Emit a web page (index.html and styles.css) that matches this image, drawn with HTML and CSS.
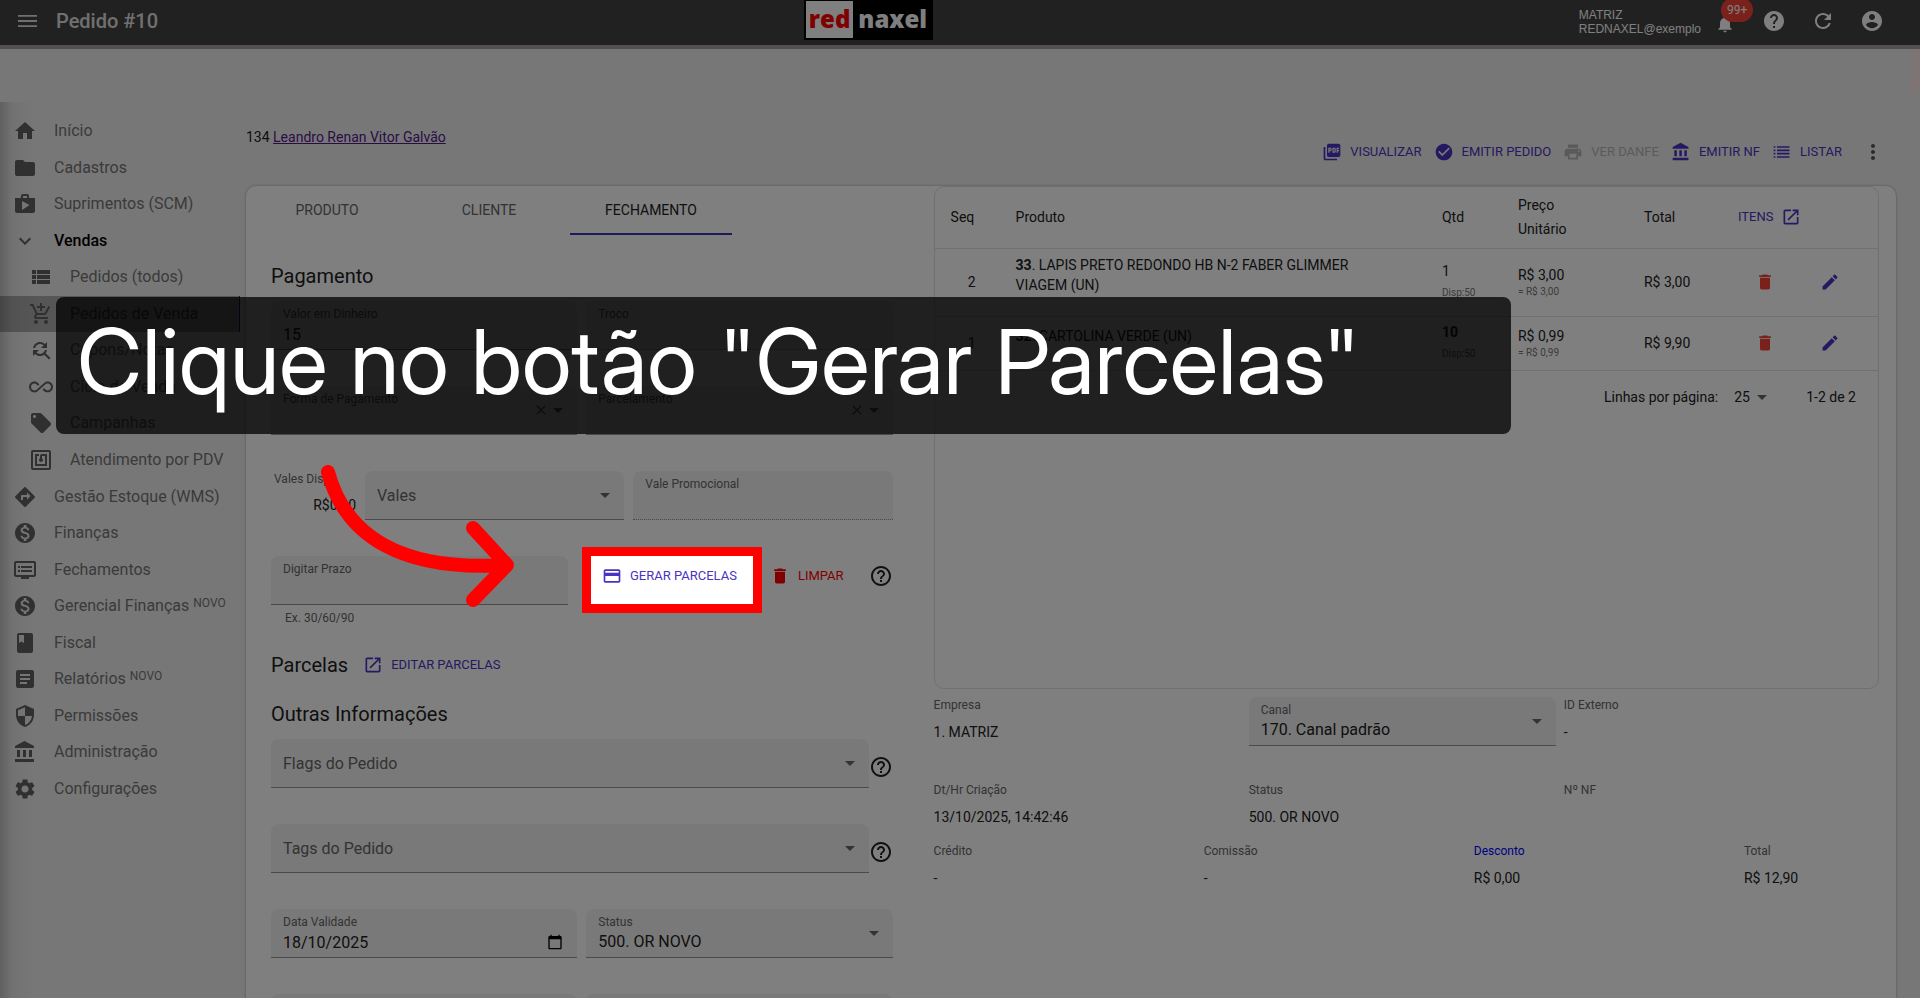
FILE: index.html
```html
<!DOCTYPE html>
<html lang="pt-BR">
<head>
    <meta charset="UTF-8">
    <meta name="viewport" content="width=device-width, initial-scale=1.0">
    <title>Pedido #10</title>
    <link rel="stylesheet" href="styles.css">
</head>
<body>

    <!-- Icon set -->
    <svg class="sprite" aria-hidden="true">
        <symbol id="i-menu" viewBox="0 0 24 24"><path d="M2 6h19v1.800H2zM2 11.100h19v1.800H2zM2 16.200h19V18H2z"/></symbol>
        <symbol id="i-bell" viewBox="0 0 24 24"><path d="M12 22c1.100 0 2-.9 2-2h-4c0 1.100.9 2 2 2zm6-6v-5c0-3.070-1.640-5.640-4.500-6.320V4c0-.83-.67-1.500-1.500-1.500s-1.500.67-1.500 1.500v.68C7.630 5.360 6 7.920 6 11v5l-2 2v1h16v-1l-2-2z"/></symbol>
        <symbol id="i-help" viewBox="0 0 24 24"><path d="M12 2C6.480 2 2 6.480 2 12s4.480 10 10 10 10-4.480 10-10S17.520 2 12 2zm1 17h-2v-2h2v2zm2.070-7.750l-.9.920C13.450 12.900 13 13.500 13 15h-2v-.5c0-1.100.45-2.100 1.170-2.830l1.240-1.260c.37-.36.59-.86.59-1.410 0-1.100-.9-2-2-2s-2 .9-2 2H8c0-2.210 1.790-4 4-4s4 1.790 4 4c0 .88-.36 1.680-.93 2.250z"/></symbol>
        <symbol id="i-help-o" viewBox="0 0 24 24"><path d="M11 18h2v-2h-2v2zm1-16C6.480 2 2 6.480 2 12s4.480 10 10 10 10-4.480 10-10S17.520 2 12 2zm0 18c-4.410 0-8-3.590-8-8s3.590-8 8-8 8 3.590 8 8-3.590 8-8 8zm0-14c-2.210 0-4 1.790-4 4h2c0-1.100.9-2 2-2s2 .9 2 2c0 2-3 1.750-3 5h2c0-2.250 3-2.500 3-5 0-2.210-1.790-4-4-4z"/></symbol>
        <symbol id="i-refresh" viewBox="0 0 24 24"><path d="M17.650 6.350C16.200 4.900 14.210 4 12 4c-4.420 0-7.990 3.580-7.990 8s3.570 8 7.990 8c3.730 0 6.840-2.550 7.730-6h-2.080c-.82 2.330-3.040 4-5.650 4-3.310 0-6-2.690-6-6s2.690-6 6-6c1.660 0 3.140.69 4.220 1.780L13 11h7V4l-2.350 2.350z"/></symbol>
        <symbol id="i-account" viewBox="0 0 24 24"><path d="M12 2C6.480 2 2 6.480 2 12s4.480 10 10 10 10-4.480 10-10S17.520 2 12 2zm0 3c1.660 0 3 1.340 3 3s-1.340 3-3 3-3-1.340-3-3 1.340-3 3-3zm0 14.200c-2.500 0-4.710-1.280-6-3.220.03-1.990 4-3.080 6-3.080 1.990 0 5.970 1.090 6 3.080-1.290 1.940-3.500 3.220-6 3.220z"/></symbol>
        <symbol id="i-home" viewBox="0 0 24 24"><path d="M10 20v-6h4v6h5v-8h3L12 3 2 12h3v8z"/></symbol>
        <symbol id="i-folder" viewBox="0 0 24 24"><path d="M10 4H4c-1.100 0-1.990.9-1.990 2L2 18c0 1.100.9 2 2 2h16c1.100 0 2-.9 2-2V8c0-1.100-.9-2-2-2h-8l-2-2z"/></symbol>
        <symbol id="i-shop" viewBox="0 0 24 24"><path d="M16 6V4c0-1.110-.89-2-2-2h-4c-1.110 0-2 .89-2 2v2H2v13c0 1.110.89 2 2 2h16c1.110 0 2-.89 2-2V6h-6zm-6-2h4v2h-4V4zM9 18V9l7.500 4L9 18z"/></symbol>
        <symbol id="i-down" viewBox="0 0 24 24"><path d="M7.410 8.590L12 13.170l4.590-4.580L18 10l-6 6-6-6z"/></symbol>
        <symbol id="i-viewlist" viewBox="0 0 24 24"><path d="M3 14h4v-4H3v4zm0 5h4v-4H3v4zM3 9h4V5H3v4zm5 5h13v-4H8v4zm0 5h13v-4H8v4zM8 5v4h13V5H8z"/></symbol>
        <symbol id="i-cart" viewBox="0 0 24 24"><path d="M11 9h2V6h3V4h-3V1h-2v3H8v2h3v3zm-4 9c-1.100 0-1.990.9-1.990 2S5.900 22 7 22s2-.9 2-2-.9-2-2-2zm10 0c-1.100 0-1.990.9-1.990 2s.89 2 1.990 2 2-.9 2-2-.9-2-2-2zm-9.830-3.250l.03-.12.9-1.630h7.450c.75 0 1.410-.41 1.750-1.030l3.860-7.010L19.420 4h-.01l-1.100 2-2.760 5H8.530l-.13-.27L6.160 6l-.95-2-.94-2H1v2h2l3.600 7.590-1.350 2.450c-.16.28-.25.61-.25.96 0 1.100.9 2 2 2h12v-2H7.420c-.13 0-.25-.11-.25-.25z"/></symbol>
        <symbol id="i-findrep" viewBox="0 0 24 24"><path d="M11 6c1.380 0 2.630.56 3.540 1.460L12 10h6V4l-2.050 2.050C14.680 4.780 12.930 4 11 4c-3.530 0-6.430 2.610-6.920 6H6.100c.46-2.280 2.480-4 4.900-4zm5.640 9.140c.66-.9 1.120-1.970 1.280-3.140H15.900c-.46 2.280-2.480 4-4.900 4-1.380 0-2.630-.56-3.540-1.460L10 12H4v6l2.050-2.050C7.320 17.220 9.070 18 11 18c1.550 0 2.980-.51 4.140-1.360L20 21.490 21.490 20l-4.850-4.860z"/></symbol>
        <symbol id="i-infinity" viewBox="0 0 24 24"><path d="M18.600 6.620c-1.440 0-2.800.56-3.770 1.530L7.800 14.390c-.64.64-1.490.99-2.400.99-1.870 0-3.390-1.510-3.390-3.380S3.530 8.620 5.400 8.620c.91 0 1.760.35 2.440 1.030l1.130 1 1.510-1.340L9.220 8.200C8.200 7.180 6.840 6.620 5.400 6.620 2.420 6.620 0 9.040 0 12s2.420 5.380 5.400 5.380c1.440 0 2.800-.56 3.770-1.530l7.030-6.240c.64-.64 1.490-.99 2.400-.99 1.870 0 3.390 1.510 3.390 3.380s-1.520 3.380-3.390 3.380c-.9 0-1.760-.35-2.440-1.030l-1.140-1.010-1.510 1.340 1.270 1.120c1.020 1.010 2.370 1.570 3.820 1.570 2.980 0 5.400-2.410 5.400-5.380s-2.420-5.370-5.400-5.370z"/></symbol>
        <symbol id="i-tag" viewBox="0 0 24 24"><path d="M21.410 11.580l-9-9C12.050 2.220 11.550 2 11 2H4c-1.100 0-2 .9-2 2v7c0 .55.22 1.050.59 1.420l9 9c.36.36.86.58 1.410.58.55 0 1.050-.22 1.410-.59l7-7c.37-.36.59-.86.59-1.410 0-.55-.23-1.060-.59-1.420zM5.500 7C4.670 7 4 6.330 4 5.500S4.670 4 5.500 4 7 4.670 7 5.500 6.330 7 5.500 7z"/></symbol>
        <symbol id="i-nfc" viewBox="0 0 24 24"><path d="M20 2H4c-1.100 0-2 .9-2 2v16c0 1.100.9 2 2 2h16c1.100 0 2-.9 2-2V4c0-1.100-.9-2-2-2zm0 18H4V4h16v16zM18 6h-5c-1.100 0-2 .9-2 2v2.280c-.6.35-1 .98-1 1.720 0 1.100.9 2 2 2s2-.9 2-2c0-.74-.4-1.380-1-1.720V8h3v8H8V8h2V6H6v12h12V6z"/></symbol>
        <symbol id="i-directions" viewBox="0 0 24 24"><path d="M21.710 11.290l-9-9c-.39-.39-1.020-.39-1.410 0l-9 9c-.39.39-.39 1.020 0 1.410l9 9c.39.39 1.020.39 1.410 0l9-9c.39-.38.39-1.010 0-1.410zM14 14.500V12h-4v3H8v-4c0-.55.45-1 1-1h5V7.500l3.500 3.500-3.500 3.500z"/></symbol>
        <symbol id="i-money" viewBox="0 0 24 24"><path d="M12 2C6.480 2 2 6.480 2 12s4.480 10 10 10 10-4.480 10-10S17.520 2 12 2zm1.410 16.090V20h-2.670v-1.930c-1.710-.36-3.160-1.460-3.270-3.400h1.960c.1 1.050.82 1.870 2.650 1.870 1.960 0 2.400-.98 2.400-1.590 0-.83-.44-1.610-2.670-2.140-2.480-.6-4.180-1.620-4.180-3.670 0-1.720 1.390-2.840 3.110-3.210V4h2.670v1.950c1.860.45 2.790 1.860 2.850 3.390H14.300c-.05-1.110-.64-1.870-2.220-1.870-1.500 0-2.400.68-2.400 1.640 0 .84.65 1.390 2.670 1.910s4.180 1.390 4.180 3.910c-.01 1.830-1.380 2.830-3.120 3.160z"/></symbol>
        <symbol id="i-dvr" viewBox="0 0 24 24"><path d="M21 3H3c-1.100 0-2 .9-2 2v12c0 1.100.9 2 2 2h5v2h8v-2h5c1.100 0 1.990-.9 1.990-2L23 5c0-1.100-.9-2-2-2zm0 14H3V5h18v12zm-2-9H8v2h11V8zm0 4H8v2h11v-2zM7 8H5v2h2V8zm0 4H5v2h2v-2z"/></symbol>
        <symbol id="i-book" viewBox="0 0 24 24"><path d="M18 2H6c-1.100 0-2 .9-2 2v16c0 1.100.9 2 2 2h12c1.100 0 2-.9 2-2V4c0-1.100-.9-2-2-2zM6 4h5v8l-2.500-1.500L6 12V4z"/></symbol>
        <symbol id="i-article" viewBox="0 0 24 24"><path d="M19 3H5c-1.100 0-2 .9-2 2v14c0 1.100.9 2 2 2h14c1.100 0 2-.9 2-2V5c0-1.100-.9-2-2-2zm-5 14H7v-2h7v2zm3-4H7v-2h10v2zm0-4H7V7h10v2z"/></symbol>
        <symbol id="i-shield" viewBox="0 0 24 24"><path d="M12 1L3 5v6c0 5.550 3.840 10.740 9 12 5.160-1.260 9-6.450 9-12V5l-9-4zm0 10.990h7c-.53 4.120-3.280 7.790-7 8.940V12H5V6.300l7-3.110v8.800z"/></symbol>
        <symbol id="i-bank" viewBox="0 0 24 24"><path d="M4 10v7h3v-7H4zm6 0v7h3v-7h-3zM2 22h19v-3H2v3zm14-12v7h3v-7h-3zm-4.500-9L2 6v2h19V6l-9.500-5z"/></symbol>
        <symbol id="i-gear" viewBox="0 0 24 24"><path d="M19.140 12.940c.04-.3.060-.61.060-.94 0-.32-.02-.64-.07-.94l2.030-1.580c.18-.14.23-.41.12-.61l-1.920-3.320c-.12-.22-.37-.29-.59-.22l-2.390.96c-.5-.38-1.030-.7-1.620-.94l-.36-2.540c-.04-.24-.24-.41-.48-.41h-3.840c-.24 0-.43.17-.47.41l-.36 2.540c-.59.24-1.130.57-1.620.94l-2.390-.96c-.22-.08-.47 0-.59.22L2.740 8.870c-.12.21-.08.47.12.61l2.030 1.580c-.05.3-.09.63-.09.94s.02.64.07.94l-2.030 1.580c-.18.14-.23.41-.12.61l1.920 3.320c.12.22.37.29.59.22l2.390-.96c.5.38 1.030.7 1.620.94l.36 2.540c.05.24.24.41.48.41h3.840c.24 0 .44-.17.47-.41l.36-2.540c.59-.24 1.130-.56 1.620-.94l2.390.96c.22.08.47 0 .59-.22l1.920-3.320c.12-.22.07-.47-.12-.61l-2.010-1.580zM12 15.600c-1.980 0-3.600-1.620-3.600-3.600s1.620-3.600 3.600-3.600 3.600 1.620 3.600 3.600-1.620 3.600-3.600 3.600z"/></symbol>
        <symbol id="i-pdf" viewBox="0 0 24 24"><path d="M20 2H8c-1.100 0-2 .9-2 2v12c0 1.100.9 2 2 2h12c1.100 0 2-.9 2-2V4c0-1.100-.9-2-2-2zm-8.500 7.500c0 .83-.67 1.500-1.500 1.500H9v2H7.500V7H10c.83 0 1.500.67 1.500 1.500v1zm5 2c0 .83-.67 1.500-1.500 1.500h-2.500V7H15c.83 0 1.500.67 1.500 1.500v3zm4-3H19v1h1.500V11H19v2h-1.500V7h3v1.500zM9 9.500h1v-1H9v1zM4 6H2v14c0 1.100.9 2 2 2h14v-2H4V6zm10 5.500h1v-3h-1v3z"/></symbol>
        <symbol id="i-check" viewBox="0 0 24 24"><path d="M12 2C6.480 2 2 6.480 2 12s4.480 10 10 10 10-4.480 10-10S17.520 2 12 2zm-2 15l-5-5 1.410-1.410L10 14.170l7.590-7.590L19 8l-9 9z"/></symbol>
        <symbol id="i-print" viewBox="0 0 24 24"><path d="M19 8H5c-1.660 0-3 1.340-3 3v6h4v4h12v-4h4v-6c0-1.660-1.340-3-3-3zm-3 11H8v-5h8v5zm3-7c-.55 0-1-.45-1-1s.45-1 1-1 1 .45 1 1-.45 1-1 1zm-1-9H6v4h12V3z"/></symbol>
        <symbol id="i-list" viewBox="0 0 24 24"><path d="M2 7h2v-2H2v2zm0 4h2V9H2v2zm0 4h2v-2H2v2zm0 4h2v-2H2v2zM6 5v2h15V5H6zm0 6h15V9H6v2zm0 4h15v-2H6v2zm0 4h15v-2H6v2z"/></symbol>
        <symbol id="i-more" viewBox="0 0 24 24"><path d="M12 8c1.100 0 2-.9 2-2s-.9-2-2-2-2 .9-2 2 .9 2 2 2zm0 2c-1.100 0-2 .9-2 2s.9 2 2 2 2-.9 2-2-.9-2-2-2zm0 6c-1.100 0-2 .9-2 2s.9 2 2 2 2-.9 2-2-.9-2-2-2z"/></symbol>
        <symbol id="i-open" viewBox="0 0 24 24"><path d="M19 19H5V5h7V3H5c-1.110 0-2 .9-2 2v14c0 1.100.89 2 2 2h14c1.100 0 2-.9 2-2v-7h-2v7zM14 3v2h3.590l-9.830 9.830 1.410 1.410L19 6.410V10h2V3h-7z"/></symbol>
        <symbol id="i-trash" viewBox="0 0 24 24"><path d="M6 19c0 1.100.9 2 2 2h8c1.100 0 2-.9 2-2V7H6v12zM19 4h-3.500l-1-1h-5l-1 1H5v2h14V4z"/></symbol>
        <symbol id="i-pencil" viewBox="0 0 24 24"><path d="M3 17.250V21h3.750L17.810 9.940l-3.750-3.750L3 17.250zM20.710 7.040c.39-.39.39-1.020 0-1.410l-2.340-2.340c-.39-.39-1.020-.39-1.410 0l-1.830 1.830 3.750 3.750 1.830-1.830z"/></symbol>
        <symbol id="i-card" viewBox="0 0 24 24"><path d="M20 4H4c-1.110 0-1.990.89-1.990 2L2 18c0 1.110.89 2 2 2h16c1.110 0 2-.89 2-2V6c0-1.110-.89-2-2-2zm0 14H4v-6h16v6zm0-10H4V6h16v2z"/></symbol>
        <symbol id="i-caret" viewBox="0 0 24 24"><path d="M7 10l5 5 5-5z"/></symbol>
        <symbol id="i-close" viewBox="0 0 24 24"><path d="M19 6.410L17.590 5 12 10.590 6.410 5 5 6.410 10.590 12 5 17.590 6.410 19 12 13.410 17.590 19 19 17.590 13.410 12z"/></symbol>
        <symbol id="i-calendar" viewBox="0 0 24 24"><path d="M20 3h-1V1h-2v2H7V1H5v2H4c-1.100 0-2 .9-2 2v16c0 1.100.9 2 2 2h16c1.100 0 2-.9 2-2V5c0-1.100-.9-2-2-2zm0 18H4V8h16v13z"/></symbol>
    </svg>

    <header class="topbar">
        <div class="topbar-left">
            <button class="icon-btn" aria-label="Menu"><svg class="icon"><use href="#i-menu"/></svg></button>
            <h1 class="title">Pedido #10</h1>
        </div>
        <a class="logo" href="#"><span class="logo-red">red</span><span class="logo-naxel">naxel</span></a>
        <div class="topbar-right">
            <div class="account">MATRIZ<br>REDNAXEL@exemplo</div>
            <button class="icon-btn bell" aria-label="Notificações"><svg class="icon-20"><use href="#i-bell"/></svg><span class="badge">99+</span></button>
            <button class="icon-btn" aria-label="Ajuda"><svg class="icon"><use href="#i-help"/></svg></button>
            <button class="icon-btn" aria-label="Atualizar"><svg class="icon"><use href="#i-refresh"/></svg></button>
            <button class="icon-btn" aria-label="Conta"><svg class="icon"><use href="#i-account"/></svg></button>
        </div>
    </header>

    <div class="layout">
        <nav class="sidebar">
            <ul class="menu">
                <li><a href="#"><svg class="icon"><use href="#i-home"/></svg>Início</a></li>
                <li><a href="#"><svg class="icon"><use href="#i-folder"/></svg>Cadastros</a></li>
                <li><a href="#"><svg class="icon"><use href="#i-shop"/></svg>Suprimentos (SCM)</a></li>
                <li><a href="#" class="open"><svg class="icon"><use href="#i-down"/></svg>Vendas</a></li>
                <li><a href="#" class="sub"><svg class="icon"><use href="#i-viewlist"/></svg>Pedidos (todos)</a></li>
                <li><a href="#" class="sub selected"><svg class="icon"><use href="#i-cart"/></svg>Pedidos de Venda</a></li>
                <li><a href="#" class="sub"><svg class="icon"><use href="#i-findrep"/></svg>Cupons/Notas</a></li>
                <li><a href="#" class="sub"><svg class="icon"><use href="#i-infinity"/></svg>Ciclo de Venda</a></li>
                <li><a href="#" class="sub"><svg class="icon"><use href="#i-tag"/></svg>Campanhas</a></li>
                <li><a href="#" class="sub"><svg class="icon"><use href="#i-nfc"/></svg>Atendimento por PDV</a></li>
                <li><a href="#"><svg class="icon"><use href="#i-directions"/></svg>Gestão Estoque (WMS)</a></li>
                <li><a href="#"><svg class="icon"><use href="#i-money"/></svg>Finanças</a></li>
                <li><a href="#"><svg class="icon"><use href="#i-dvr"/></svg>Fechamentos</a></li>
                <li><a href="#"><svg class="icon"><use href="#i-money"/></svg><span>Gerencial Finanças <sup>NOVO</sup></span></a></li>
                <li><a href="#"><svg class="icon"><use href="#i-book"/></svg>Fiscal</a></li>
                <li><a href="#"><svg class="icon"><use href="#i-article"/></svg><span>Relatórios <sup>NOVO</sup></span></a></li>
                <li><a href="#"><svg class="icon"><use href="#i-shield"/></svg>Permissões</a></li>
                <li><a href="#"><svg class="icon"><use href="#i-bank"/></svg>Administração</a></li>
                <li><a href="#"><svg class="icon"><use href="#i-gear"/></svg>Configurações</a></li>
            </ul>
        </nav>

        <main class="content">
            <div class="content-head">
                <div class="customer">134 <a href="#">Leandro Renan Vitor Galvão</a></div>
                <div class="toolbar">
                    <button class="btn"><svg class="icon-20"><use href="#i-pdf"/></svg>VISUALIZAR</button>
                    <button class="btn"><svg class="icon-20"><use href="#i-check"/></svg>EMITIR PEDIDO</button>
                    <button class="btn" disabled><svg class="icon-20"><use href="#i-print"/></svg>VER DANFE</button>
                    <button class="btn"><svg class="icon-20"><use href="#i-bank"/></svg>EMITIR NF</button>
                    <button class="btn"><svg class="icon-20"><use href="#i-list"/></svg>LISTAR</button>
                    <button class="icon-btn more" aria-label="Mais opções"><svg class="icon"><use href="#i-more"/></svg></button>
                </div>
            </div>

            <div class="card">
                <section class="left">
                    <div class="tabs" role="tablist">
                        <button class="tab" role="tab">PRODUTO</button>
                        <button class="tab" role="tab">CLIENTE</button>
                        <button class="tab active" role="tab" aria-selected="true">FECHAMENTO</button>
                    </div>

                    <form class="form">
                        <h2>Pagamento</h2>
                        <div class="stack">
                            <div class="row-2">
                                <div class="field">
                                    <label for="dinheiro">Valor em Dinheiro</label>
                                    <input id="dinheiro" type="text" value="15">
                                </div>
                                <div class="field off">
                                    <label for="troco">Troco</label>
                                    <input id="troco" type="text" disabled>
                                </div>
                            </div>
                            <div class="row-2">
                                <div class="field">
                                    <label for="forma">Forma de Pagamento</label>
                                    <select id="forma"><option></option></select>
                                    <svg class="clear"><use href="#i-close"/></svg>
                                    <svg class="caret"><use href="#i-caret"/></svg>
                                </div>
                                <div class="field">
                                    <label for="parcelamento">Parcelamento</label>
                                    <select id="parcelamento"><option></option></select>
                                    <svg class="clear"><use href="#i-close"/></svg>
                                    <svg class="caret"><use href="#i-caret"/></svg>
                                </div>
                            </div>
                            <div class="row-vales">
                                <div class="vales">
                                    <span class="vales-label">Vales Disp:</span>
                                    <span class="vales-value">R$0,00</span>
                                </div>
                                <div class="field rest">
                                    <select aria-label="Vales"><option>Vales</option></select>
                                    <svg class="caret"><use href="#i-caret"/></svg>
                                </div>
                                <div class="field off">
                                    <label for="promo">Vale Promocional</label>
                                    <input id="promo" type="text" disabled>
                                </div>
                            </div>
                            <div class="row-prazo">
                                <div class="prazo">
                                    <div class="field">
                                        <label for="prazo">Digitar Prazo</label>
                                        <input id="prazo" type="text">
                                    </div>
                                    <small>Ex. 30/60/90</small>
                                </div>
                                <div class="spotlight">
                                    <button type="button" class="btn"><svg class="icon-20"><use href="#i-card"/></svg>GERAR PARCELAS</button>
                                </div>
                                <button type="button" class="btn red"><svg class="icon-20"><use href="#i-trash"/></svg>LIMPAR</button>
                                <button type="button" class="icon-btn help" aria-label="Ajuda prazo"><svg class="icon"><use href="#i-help-o"/></svg></button>
                            </div>
                        </div>

                        <div class="heading-row">
                            <h2>Parcelas</h2>
                            <button type="button" class="btn"><svg class="icon-20"><use href="#i-open"/></svg>EDITAR PARCELAS</button>
                        </div>

                        <h2>Outras Informações</h2>
                        <div class="stack">
                            <div class="row-help">
                                <div class="field rest">
                                    <select aria-label="Flags do Pedido"><option>Flags do Pedido</option></select>
                                    <svg class="caret"><use href="#i-caret"/></svg>
                                </div>
                                <button type="button" class="icon-btn" aria-label="Ajuda flags"><svg class="icon"><use href="#i-help-o"/></svg></button>
                            </div>
                            <div class="row-help">
                                <div class="field rest">
                                    <select aria-label="Tags do Pedido"><option>Tags do Pedido</option></select>
                                    <svg class="caret"><use href="#i-caret"/></svg>
                                </div>
                                <button type="button" class="icon-btn" aria-label="Ajuda tags"><svg class="icon"><use href="#i-help-o"/></svg></button>
                            </div>
                            <div class="row-2">
                                <div class="field">
                                    <label for="validade">Data Validade</label>
                                    <input id="validade" type="text" value="18/10/2025">
                                    <svg class="calendar"><use href="#i-calendar"/></svg>
                                </div>
                                <div class="field">
                                    <label for="status">Status</label>
                                    <select id="status"><option>500. OR NOVO</option></select>
                                    <svg class="caret"><use href="#i-caret"/></svg>
                                </div>
                            </div>
                            <div class="row-2">
                                <div class="field"></div>
                                <div class="field"></div>
                            </div>
                        </div>
                    </form>
                </section>

                <section class="right">
                    <div class="items">
                        <table>
                            <colgroup>
                                <col class="c-seq"><col><col class="c-qtd"><col class="c-preco"><col class="c-total"><col class="c-del"><col class="c-edit">
                            </colgroup>
                            <thead>
                                <tr>
                                    <th>Seq</th>
                                    <th>Produto</th>
                                    <th>Qtd</th>
                                    <th>Preço<br>Unitário</th>
                                    <th>Total</th>
                                    <th colspan="2"><button class="btn">ITENS<svg class="icon-20"><use href="#i-open"/></svg></button></th>
                                </tr>
                            </thead>
                            <tbody>
                                <tr class="tall">
                                    <td class="seq">2</td>
                                    <td class="prod"><b>33</b>. LAPIS PRETO REDONDO HB N-2 FABER GLIMMER VIAGEM (UN)</td>
                                    <td class="qtd">1<small>Disp:50</small></td>
                                    <td class="price">R$ 3,00<small>= R$ 3,00</small></td>
                                    <td>R$ 3,00</td>
                                    <td class="act"><button class="icon-btn del" aria-label="Excluir item 2"><svg class="icon-20"><use href="#i-trash"/></svg></button></td>
                                    <td class="act last"><button class="icon-btn edit" aria-label="Editar item 2"><svg class="icon-20"><use href="#i-pencil"/></svg></button></td>
                                </tr>
                                <tr>
                                    <td class="seq">1</td>
                                    <td class="prod"><b>32</b>. CARTOLINA VERDE (UN)</td>
                                    <td class="qtd"><b>10</b><small>Disp:50</small></td>
                                    <td class="price">R$ 0,99<small>= R$ 0,99</small></td>
                                    <td>R$ 9,90</td>
                                    <td class="act"><button class="icon-btn del" aria-label="Excluir item 1"><svg class="icon-20"><use href="#i-trash"/></svg></button></td>
                                    <td class="act last"><button class="icon-btn edit" aria-label="Editar item 1"><svg class="icon-20"><use href="#i-pencil"/></svg></button></td>
                                </tr>
                            </tbody>
                        </table>
                        <div class="pager">
                            <label for="linhas">Linhas por página:</label>
                            <span class="pager-select">
                                <select id="linhas"><option>25</option></select>
                                <svg class="icon"><use href="#i-caret"/></svg>
                            </span>
                            <span>1-2 de 2</span>
                        </div>
                    </div>

                    <div class="info-3">
                        <div class="info"><span>Empresa</span><p>1. MATRIZ</p></div>
                        <div class="field">
                            <label for="canal">Canal</label>
                            <select id="canal"><option>170. Canal padrão</option></select>
                            <svg class="caret"><use href="#i-caret"/></svg>
                        </div>
                        <div class="info"><span>ID Externo</span><p>-</p></div>
                        <div class="info"><span>Dt/Hr Criação</span><p>13/10/2025, 14:42:46</p></div>
                        <div class="info"><span>Status</span><p>500. OR NOVO</p></div>
                        <div class="info"><span>Nº NF</span></div>
                    </div>
                    <div class="info-4">
                        <div class="info"><span>Crédito</span><p>-</p></div>
                        <div class="info"><span>Comissão</span><p>-</p></div>
                        <div class="info"><a href="#">Desconto</a><p>R$ 0,00</p></div>
                        <div class="info"><span>Total</span><p>R$ 12,90</p></div>
                    </div>
                </section>
            </div>
        </main>
    </div>

    <!-- Tutorial step: caption and arrow -->
    <div class="caption">Clique no botão "Gerar Parcelas"</div>
    <svg class="arrow" viewBox="0 0 200 150" aria-hidden="true">
        <path d="M8 12C25 75 80 112 187 105M153 68L187 105L153 140"/>
    </svg>

</body>
</html>
```
FILE: styles.css
```css
:root {
    --primary: #4b32c3;
    --page: #efefef;
    --text: #212121;
    --muted: #666;
    --line: #e0e0e0;
}

* {
    box-sizing: border-box;
}

body {
    margin: 0;
    height: 100vh;
    overflow: hidden;
    position: relative;
    font-family: Roboto, sans-serif;
    font-size: 14px;
    line-height: 20px;
    color: var(--text);
    background: var(--page);
}

h1, h2, p, ul {
    margin: 0;
    padding: 0;
    font-weight: 400;
}

button, input, select {
    font: inherit;
    color: inherit;
    background: none;
    border: none;
    padding: 0;
    margin: 0;
    outline: none;
    appearance: none;
}

button {
    cursor: pointer;
}

svg {
    fill: currentColor;
    flex: none;
}

.sprite {
    display: none;
}

.icon {
    width: 24px;
    height: 24px;
}

.icon-20 {
    width: 20px;
    height: 20px;
}

.icon-btn {
    display: flex;
    align-items: center;
    justify-content: center;
}

.btn {
    display: inline-flex;
    align-items: center;
    gap: 8px;
    height: 36px;
    font-size: 13px;
    color: var(--primary);
    white-space: nowrap;
}

.btn:disabled {
    color: #b5b5b5;
}

/* Top bar */
.topbar {
    position: relative;
    display: flex;
    justify-content: space-between;
    height: 49px;
    padding: 0 36px 0 16px;
    color: #fff;
    background: #424242;
    border-bottom: 4px solid #a8a0a0;
}

.topbar::after {
    content: "";
    position: absolute;
    top: 49px;
    right: 0;
    width: 9px;
    height: 46px;
    border-radius: 0 0 8px 0;
    background: #fbe9e7;
}

.topbar-left, .topbar-right {
    display: flex;
    align-items: center;
    height: 42px;
}

.topbar-left {
    gap: 16px;
    color: #e0e0e0;
}

.topbar-right {
    justify-content: flex-end;
    gap: 25px;
}

.title {
    font-size: 20px;
    font-weight: 500;
}

.logo {
    display: flex;
    align-self: flex-start;
    height: 40px;
    padding: 1px 6px 2px 2px;
    background: #000;
    font-family: "Open Sans", sans-serif;
    font-size: 24px;
    font-weight: 800;
    line-height: 36px;
    text-decoration: none;
}

.logo-red {
    padding: 0 3px;
    color: #f00;
    background: #fff;
}

.logo-naxel {
    padding-left: 5px;
    color: #fff;
}

.account {
    font-family: "Liberation Sans", sans-serif;
    font-size: 12px;
    line-height: 14px;
    padding-top: 1px;
}

.bell {
    position: relative;
    padding-top: 6px;
    margin: 0 2px 0 -11px;
}

.badge {
    position: absolute;
    left: 6px;
    top: -10px;
    height: 24px;
    padding: 0 6px;
    border-radius: 12px;
    font-size: 12px;
    line-height: 25px;
    background: #f44336;
}

.layout {
    display: flex;
}

/* Sidebar */
.sidebar {
    width: 240px;
    margin-top: 53px;
    padding-top: 11px;
    min-height: 900px;
    background: linear-gradient(90deg, #c0c0c0, #e4e4e4 12px, var(--page) 36px);
}

.menu {
    display: grid;
    grid-auto-rows: 1fr;
    height: 694px;
    list-style: none;
}

.menu a {
    display: flex;
    align-items: center;
    gap: 17px;
    height: 100%;
    padding-left: 13px;
    font-size: 16px;
    color: #757575;
    text-decoration: none;
}

.menu a.open {
    color: #000;
    font-weight: 500;
}

.menu a.sub {
    padding-left: 29px;
}

.menu a.selected {
    color: #424242;
    background: rgba(0, 0, 0, 0.28);
    border-right: 1px solid #1a1aa0;
}

.menu svg {
    color: #616161;
}

.menu sup {
    font-size: 12px;
    line-height: 0;
    vertical-align: 4px;
}

/* Content */
.content {
    flex: 1;
    padding: 0 24px 0 6px;
}

.content-head {
    display: flex;
    justify-content: space-between;
    min-height: 137px;
    padding: 76px 0 16px;
}

.customer {
    line-height: 24px;
}

.customer a {
    color: #551a8b;
}

.toolbar {
    display: flex;
    align-self: flex-end;
    gap: 12px;
    padding-right: 10px;
}

.more {
    width: 26px;
    margin-left: 6px;
    color: #555;
}

.card {
    display: grid;
    grid-template-columns: 8fr 11fr;
    padding-right: 17px;
    background: #fff;
    border-radius: 10px 10px 0 0;
    box-shadow: 0 0 3px rgba(0, 0, 0, 0.3);
}

.tabs {
    display: flex;
}

.tab {
    width: 162px;
    height: 49px;
    color: #666;
    border-bottom: 2px solid transparent;
}

.tab.active {
    color: var(--text);
    border-color: #3a35b5;
}

.form {
    padding: 29px 41px 0 25px;
}

h2 {
    font-size: 20px;
    line-height: 24px;
    margin-bottom: 13px;
}

.stack {
    display: grid;
    gap: 36px;
}

.row-2 {
    display: grid;
    grid-template-columns: 1fr 1fr;
    gap: 9px;
}

.row-vales {
    display: grid;
    grid-template-columns: 85px 1fr 1fr;
    gap: 9px;
}

.vales {
    display: flex;
    flex-direction: column;
    gap: 8px;
    padding-left: 3px;
}

.vales-label {
    font-size: 12px;
    line-height: 16px;
    color: var(--muted);
}

.vales-value {
    text-align: right;
}

.row-prazo, .row-help {
    display: flex;
    align-items: flex-start;
}

.prazo {
    flex: 1;
    margin-right: 23px;
}

.prazo small {
    display: block;
    padding: 5px 14px 0;
    font-size: 12px;
    line-height: 16px;
    color: var(--muted);
}

/* Filled input */
.field {
    position: relative;
    display: flex;
    flex-direction: column;
    height: 49px;
    padding: 5px 12px 0;
    background: #f3f3f3;
    border-bottom: 1px solid #949494;
    border-radius: 8px 8px 0 0;
}

.field label {
    font-size: 12px;
    line-height: 17px;
    color: var(--muted);
}

.field input, .field select {
    width: 100%;
    height: 22px;
    font-size: 16px;
}

.field.rest {
    flex: 1;
    padding-top: 1px;
}

.field.rest select {
    height: 48px;
    color: var(--muted);
}

.field.off {
    border-bottom-style: dotted;
}

.caret, .clear, .calendar {
    position: absolute;
    right: 7px;
    top: 12px;
    width: 24px;
    height: 24px;
    color: #666;
    pointer-events: none;
}

.clear {
    right: 28px;
    top: 16px;
    width: 16px;
    height: 16px;
}

.calendar {
    right: 14px;
    top: 25px;
    width: 16px;
    height: 16px;
    color: #000;
}

/* Highlighted step: everything outside of the frame is dimmed */
.spotlight {
    position: relative;
    height: 48px;
    padding: 2px 16px 0 11px;
}

.spotlight::after {
    content: "";
    position: absolute;
    inset: -9px;
    z-index: 10;
    border: 9px solid #f00;
    box-shadow: 0 0 0 2000px rgba(0, 0, 0, 0.5);
    pointer-events: none;
}

.btn.red {
    height: 40px;
    margin-left: 17px;
    color: #f00;
}

.help {
    height: 40px;
    margin-left: 25px;
}

.row-help .icon-btn {
    padding-top: 16px;
}

.heading-row {
    display: flex;
    align-items: center;
    gap: 15px;
    height: 30px;
    margin: 24px 0 22px;
}

.heading-row h2 {
    margin: 0;
}

/* Items table */
.items {
    height: 503px;
    border: 1px solid var(--line);
    border-radius: 10px;
}

table {
    width: 100%;
    table-layout: fixed;
    border-collapse: collapse;
}

.c-seq { width: 65px; }
.c-qtd { width: 76px; }
.c-preco { width: 126px; }
.c-total { width: 94px; }
.c-del { width: 86px; }
.c-edit { width: 70px; }

th, td {
    padding: 0 16px;
    font-weight: 400;
    text-align: left;
    border-bottom: 1px solid var(--line);
}

th {
    height: 61px;
    line-height: 24px;
}

td {
    height: 54px;
}

.tall td {
    height: 68px;
}

td.seq {
    text-align: right;
    padding-right: 24px;
}

td.prod {
    padding: 0 24px 14px 16px;
}

td small {
    display: block;
    font-size: 10px;
    line-height: 14px;
    color: #777;
}

td.qtd {
    line-height: 22px;
}

td.qtd small {
    line-height: 22px;
}

td.act {
    padding: 0;
}

td.last {
    padding-right: 26px;
}

td.act .icon-btn {
    margin: 0 auto;
}

.del {
    color: #f44336;
}

.edit {
    color: var(--primary);
}

.pager {
    display: flex;
    justify-content: flex-end;
    align-items: center;
    gap: 16px;
    height: 52px;
    padding-right: 22px;
}

.pager-select {
    display: flex;
    align-items: center;
    margin-right: 16px;
}

.pager-select svg {
    color: #666;
}

.info-3 {
    display: grid;
    grid-template-columns: 1fr 1fr 1fr;
    row-gap: 36px;
    padding-top: 8px;
}

.info-3 .field {
    margin-right: 8px;
}

.info-4 {
    display: grid;
    grid-template-columns: 2fr 2fr 2fr 1fr;
    padding-top: 16px;
}

.info {
    font-size: 14px;
}

.info span, .info a {
    display: block;
    font-size: 12px;
    line-height: 16px;
    color: var(--muted);
}

.info a {
    color: #00f;
    text-decoration: none;
}

.info p {
    padding-top: 9px;
}

/* Caption over the dimmed page */
.caption {
    position: absolute;
    left: 56px;
    right: 409px;
    top: 297px;
    z-index: 20;
    height: 137px;
    padding: 0 21px;
    border-radius: 8px;
    font-family: "Inter Display", Inter, sans-serif;
    font-size: 90px;
    font-variation-settings: "opsz" 32;
    line-height: 130px;
    white-space: nowrap;
    color: #fff;
    background: rgba(0, 0, 0, 0.75);
}

.arrow {
    position: absolute;
    left: 320px;
    top: 460px;
    z-index: 20;
    width: 200px;
    height: 150px;
    fill: none;
    stroke: #f00;
    stroke-width: 14;
    stroke-linecap: round;
    stroke-linejoin: round;
}
```
